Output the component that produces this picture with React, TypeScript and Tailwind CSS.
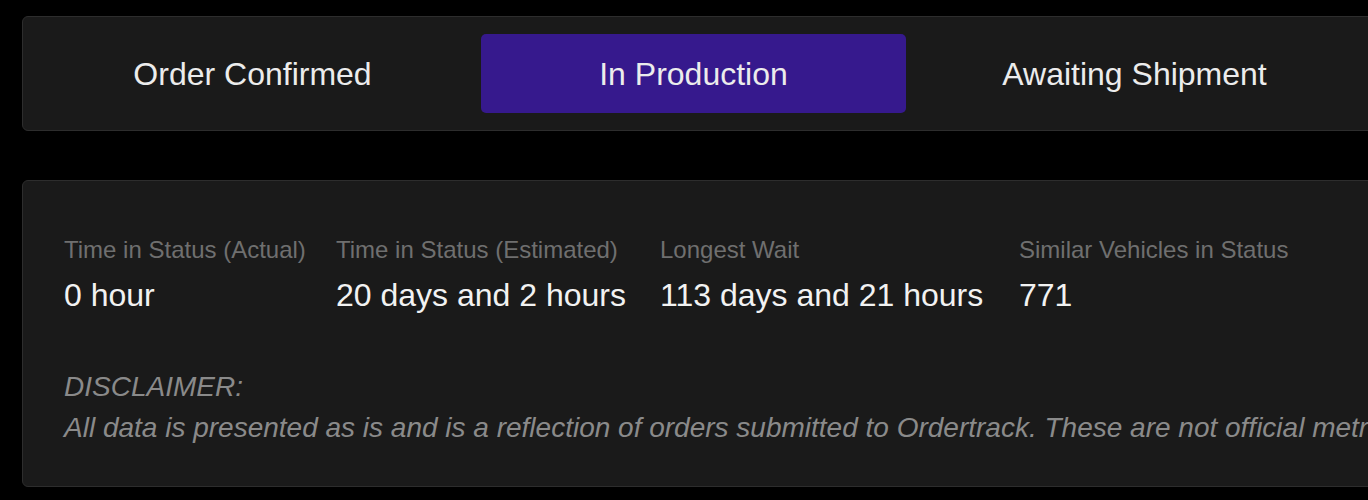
import React from "react";

const steps = ["Order Confirmed", "In Production", "Awaiting Shipment"];
const activeStep = "In Production";

const stats = [
  { label: "Time in Status (Actual)", value: "0 hour", width: "w-[240px]" },
  { label: "Time in Status (Estimated)", value: "20 days and 2 hours", width: "w-[292px]" },
  { label: "Longest Wait", value: "113 days and 21 hours", width: "w-[327px]" },
  { label: "Similar Vehicles in Status", value: "771", width: "" },
];

export default function App() {
  return (
    <div
      className="h-[500px] w-[1368px] overflow-hidden bg-black"
      style={{ fontFamily: '"Liberation Sans", Arial, sans-serif' }}
    >
      <div className="w-[1420px] px-[22px] pt-4">
        {/* status steps */}
        <div className="flex gap-4 rounded-md border border-[#2d2d2d] bg-[#1a1a1a] p-[17px]">
          {steps.map((step) => (
            <div
              key={step}
              className={`flex h-[79px] w-[425px] shrink-0 items-center justify-center rounded-[5px] text-[32px] text-[#ececec] ${
                step === activeStep ? "bg-[#36198d]" : ""
              }`}
            >
              {step}
            </div>
          ))}
        </div>

        {/* stats */}
        <div className="mt-[49px] rounded-md border border-[#2d2d2d] bg-[#1a1a1a] pb-[38px] pl-[41px] pt-[55px]">
          <div className="flex gap-8 whitespace-nowrap">
            {stats.map((s) => (
              <div key={s.label} className={`flex shrink-0 flex-col gap-3 ${s.width}`}>
                <span className="text-[24px] leading-[28px] text-[#6f6f6f]">{s.label}</span>
                <span className="text-[32px] leading-[38px] text-[#f2f2f2]">{s.value}</span>
              </div>
            ))}
          </div>
          <div className="mt-[52px] whitespace-nowrap text-[28px] italic leading-[41px] text-[#8a8a8a]">
            <p>DISCLAIMER:</p>
            <p>
              All data is presented as is and is a reflection of orders submitted to Ordertrack. These are not
              official metrics.
            </p>
          </div>
        </div>
      </div>
    </div>
  );
}
